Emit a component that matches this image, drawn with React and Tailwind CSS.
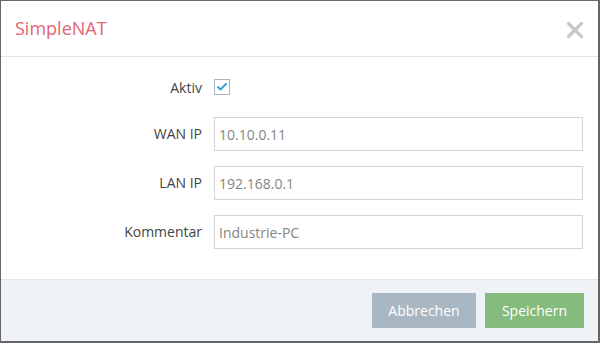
import { Check, X } from 'lucide-react';

const Field = ({ label, value }) => (
  <div className="flex items-center">
    <label className="w-[201px] text-right text-[14px] text-[#444] -mt-[2px]">{label}</label>
    <div className="ml-3 w-[369px] h-[34px] border border-[#d4d4d4] bg-white px-[4px] flex items-center text-[14px] text-[#858585]">
      {value}
    </div>
  </div>
);

const App = () => {
  return (
    <div className="w-[600px] h-[343px] bg-[#666] p-[1px] pr-[2px] pb-[2px]" style={{ fontFamily: '"Open Sans", sans-serif' }}>
      <div className="w-full h-full bg-white flex flex-col">
        <div className="h-[56px] border-b border-[#e5e5e5] flex items-center justify-between pl-[14px] pr-[10px] shrink-0">
          <h4 className="text-[18px] text-[#e46474] leading-none -mt-[1px]">SimpleNAT</h4>
          <X className="w-[26px] h-[26px] text-[#c8c8c8] mt-[3px]" strokeWidth={3} />
        </div>

        <div className="flex-1 pt-[22px] flex flex-col gap-[15px]">
          <div className="flex items-center h-[16px] mb-[7px]">
            <label className="w-[201px] text-right text-[14px] text-[#444]">Aktiv</label>
            <div className="ml-3 w-[16px] h-[16px] border border-[#a9b5c2] bg-white flex items-center justify-center">
              <Check className="w-[12px] h-[12px] text-[#3aa0d6]" strokeWidth={4} />
            </div>
          </div>
          <Field label="WAN IP" value="10.10.0.11" />
          <Field label="LAN IP" value="192.168.0.1" />
          <Field label="Kommentar" value="Industrie-PC" />
        </div>

        <div className="h-[62px] shrink-0 border-t border-[#e3e7ec] bg-[#eff3f8] flex items-center justify-end gap-[9px] pr-[14px] pb-[1px]">
          <button className="w-[104px] h-[35px] bg-[#a9b7c2] text-white text-[14px]">Abbrechen</button>
          <button className="w-[99px] h-[35px] bg-[#86bb7e] text-white text-[14px]">Speichern</button>
        </div>
      </div>
    </div>
  );
};

export default App;
